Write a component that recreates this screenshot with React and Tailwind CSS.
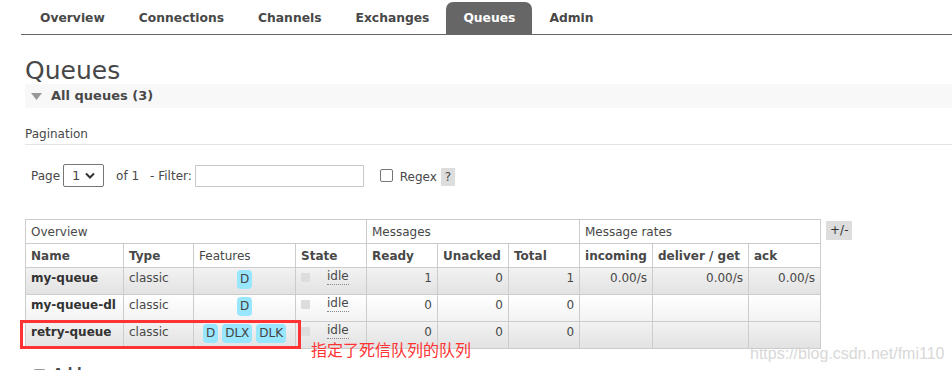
const tabs = ['Overview', 'Connections', 'Channels', 'Exchanges', 'Queues', 'Admin'];

const queues = [
  { name: 'my-queue', features: ['D'], ready: 1, unacked: 0, total: 1, rates: ['0.00/s', '0.00/s', '0.00/s'], alt: true },
  { name: 'my-queue-dl', features: ['D'], ready: 0, unacked: 0, total: 0, rates: ['', '', ''], alt: false },
  { name: 'retry-queue', features: ['D', 'DLX', 'DLK'], ready: 0, unacked: 0, total: 0, rates: ['', '', ''], alt: true },
];

function Badge({ children }) {
  return <span className="inline-block bg-[#99e6ff] text-[#444] rounded-[4px] px-[3px] leading-[19px] mx-[2px]">{children}</span>;
}

function Triangle() {
  return (
    <svg width="11" height="7" viewBox="0 0 11 7" className="shrink-0">
      <path d="M0 0 L11 0 L5.5 7 Z" fill="#999" />
    </svg>
  );
}

export default function App() {
  const th = 'border border-[#ccc] text-left font-bold px-[5px] h-[24px] align-middle';
  const td = 'border border-[#ccc] px-[5px] pt-[1px] pb-[2px] align-top h-[27px]';
  return (
    <div className="relative w-[952px] h-[370px] overflow-hidden bg-white text-[#484848] text-[12px]" style={{ fontFamily: '"DejaVu Sans", Verdana, sans-serif' }}>
      <div className="ml-[21px] flex items-end h-[35px] border-b border-[#666] pl-[2px]">
        {tabs.map((t) => (
          <div
            key={t}
            className={
              'px-[17px] h-[32px] flex items-center font-bold text-[12.3px] rounded-t-[7px] ' +
              (t === 'Queues' ? 'bg-[#666] text-white' : 'text-[#484848]')
            }
          >
            {t}
          </div>
        ))}
      </div>

      <div className="pl-[25px]">
        <h1 className="text-[25px] leading-[30px] mt-[21px] font-normal">Queues</h1>
        <div className="mt-[-2px] h-[24px] bg-[#f8f8f8] flex items-center gap-[9px] pl-[6px]">
          <Triangle />
          <span className="font-bold text-[13px]">All queues (3)</span>
        </div>

        <div className="mt-[19px] leading-[14px] pb-[3px] border-b border-[#e4e4e4]">Pagination</div>

        <div className="mt-[19px] flex items-center pl-[6px] h-[23px]">
          <span>Page</span>
          <div className="ml-[3px] w-[41px] h-[23px] border border-[#767676] rounded-[2px] flex items-center justify-between px-[8px] text-[13px]">
            <span>1</span>
            <svg width="10" height="7" viewBox="0 0 10 7"><path d="M1 1.5 L5 5.5 L9 1.5" stroke="#333" strokeWidth="2" fill="none" /></svg>
          </div>
          <span className="ml-[12px]">of 1</span>
          <span className="ml-[11px]">- Filter:</span>
          <div className="ml-[3px] w-[169px] h-[22px] border border-[#c8c8c8]" />
          <div className="ml-[16px] w-[13px] h-[13px] border border-[#767676] rounded-[2px]" />
          <span className="ml-[7px] mt-[2px]">Regex</span>
          <span className="ml-[4px] mt-[2px] bg-[#ddd] px-[4px] leading-[18px]">?</span>
        </div>

        <div className="mt-[32px] flex items-start">
          <table className="border-collapse w-[795px] table-fixed">
            <colgroup>
              <col className="w-[98px]" />
              <col className="w-[70px]" />
              <col className="w-[102px]" />
              <col className="w-[71px]" />
              <col className="w-[71px]" />
              <col className="w-[71px]" />
              <col className="w-[71px]" />
              <col className="w-[73px]" />
              <col className="w-[96px]" />
              <col className="w-[72px]" />
            </colgroup>
            <thead>
              <tr>
                <th colSpan={4} className={th + ' font-normal'}>Overview</th>
                <th colSpan={3} className={th + ' font-normal'}>Messages</th>
                <th colSpan={3} className={th + ' font-normal'}>Message rates</th>
              </tr>
              <tr>
                <th className={th}>Name</th>
                <th className={th}>Type</th>
                <th className={th + ' font-normal'}>Features</th>
                <th className={th}>State</th>
                <th className={th}>Ready</th>
                <th className={th}>Unacked</th>
                <th className={th}>Total</th>
                <th className={th}>incoming</th>
                <th className={th}>deliver / get</th>
                <th className={th}>ack</th>
              </tr>
            </thead>
            <tbody>
              {queues.map((q) => {
                const bg = q.alt ? 'bg-gradient-to-b from-[#f2f2f2] to-[#e2e2e2]' : 'bg-gradient-to-b from-[#ffffff] to-[#f2f2f2]';
                return (
                  <tr key={q.name} className={bg}>
                    <td className={td + ' font-bold text-[#333]'}>{q.name}</td>
                    <td className={td}>classic</td>
                    <td className="border border-[#ccc] px-0 pt-[2px] align-top h-[27px] text-center whitespace-nowrap">
                      {q.features.map((f) => (
                        <Badge key={f}>{f}</Badge>
                      ))}
                    </td>
                    <td className={td}>
                      <div className="flex items-start">
                        <span className="w-[9px] h-[9px] bg-[#ddd] mt-[4px]" />
                        <span className="ml-[17px] border-b border-dotted border-[#888] leading-[15px]">idle</span>
                      </div>
                    </td>
                    <td className={td + ' text-right'}>{q.ready}</td>
                    <td className={td + ' text-right'}>{q.unacked}</td>
                    <td className={td + ' text-right'}>{q.total}</td>
                    <td className={td + ' text-right'}>{q.rates[0]}</td>
                    <td className={td + ' text-right'}>{q.rates[1]}</td>
                    <td className={td + ' text-right'}>{q.rates[2]}</td>
                  </tr>
                );
              })}
            </tbody>
          </table>
          <span className="ml-[5px] mt-[2px] bg-[#ddd] px-[4px] leading-[19px] text-[#333]">+/-</span>
        </div>

        <div className="mt-[14px] flex items-center gap-[8px] pl-[9px]">
          <Triangle />
          <span className="font-bold text-[13px]">Add a new queue</span>
        </div>
      </div>

      <div className="absolute left-[20px] top-[320px] w-[281px] h-[29px] border-[3px] border-[#f33]" />
      <div className="absolute left-[311px] top-[337px] text-[16px] text-[#f33]" style={{ fontFamily: '"Noto Sans CJK SC", sans-serif' }}>
        指定了死信队列的队列
      </div>
      <div className="absolute left-[750px] top-[342px] text-[16px] text-[#d8d8d8]" style={{ fontFamily: '"Liberation Sans", Arial, sans-serif' }}>
        https://blog.csdn.net/fmi110
      </div>
    </div>
  );
}
